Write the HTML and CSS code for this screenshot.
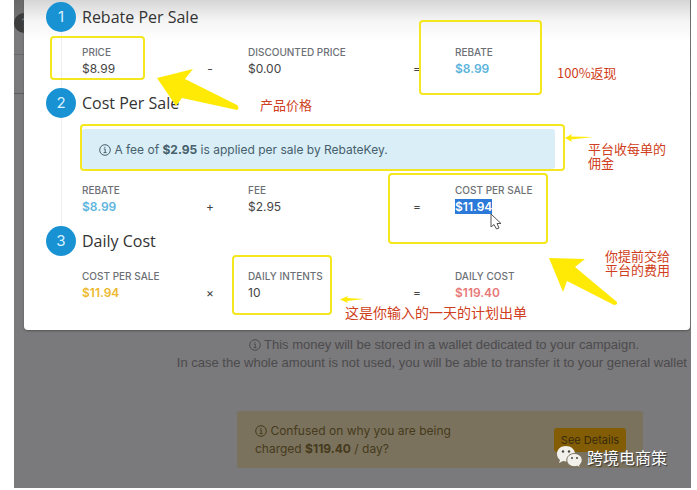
FILE: index.html
```html
<!DOCTYPE html>
<html lang="en">
<head>
  <meta charset="utf-8">
  <title>Rebate cost</title>
  <link rel="stylesheet" href="styles.css">
</head>
<body>
  <div class="screen">
    <span class="back-step">1</span>
    <div class="modal">
      <section class="step">
        <div class="number">1</div>
        <div class="content">
          <h2>Rebate Per Sale</h2>
          <div class="formula">
            <div><h3>Price</h3><p>$8.99</p></div>
            <span class="op">-</span>
            <div><h3>Discounted Price</h3><p>$0.00</p></div>
            <span class="op">=</span>
            <div><h3>Rebate</h3><p class="blue">$8.99</p></div>
          </div>
        </div>
      </section>
      <section class="step">
        <div class="number">2</div>
        <div class="content">
          <h2>Cost Per Sale</h2>
          <div class="info">
            <svg class="icon" viewBox="0 0 12 12"><circle cx="6" cy="6" r="5.3"/><path d="M4.8 5h1.4v3.5M4.6 8.6h3M5.9 2.8v1.1"/></svg>
            A fee of <b>$2.95</b> is applied per sale by RebateKey.
          </div>
          <div class="formula">
            <div><h3>Rebate</h3><p class="blue">$8.99</p></div>
            <span class="op">+</span>
            <div><h3>Fee</h3><p>$2.95</p></div>
            <span class="op">=</span>
            <div><h3>Cost Per Sale</h3><p><mark>$11.94</mark></p></div>
          </div>
        </div>
      </section>
      <section class="step">
        <div class="number">3</div>
        <div class="content">
          <h2>Daily Cost</h2>
          <div class="formula">
            <div><h3>Cost Per Sale</h3><p class="gold">$11.94</p></div>
            <span class="op">×</span>
            <div><h3>Daily Intents</h3><p>10</p></div>
            <span class="op">=</span>
            <div><h3>Daily Cost</h3><p class="red">$119.40</p></div>
          </div>
        </div>
      </section>
    </div>

    <div class="wallet">
      <p class="first">
        <svg class="icon" viewBox="0 0 12 12"><circle cx="6" cy="6" r="5.3"/><path d="M4.8 5h1.4v3.5M4.6 8.6h3M5.9 2.8v1.1"/></svg>
        This money will be stored in a wallet dedicated to your campaign.
      </p>
      <p>In case the whole amount is not used, you will be able to transfer it to your general wallet</p>
    </div>

    <div class="warning">
      <p>
        <svg class="icon" viewBox="0 0 12 12"><circle cx="6" cy="6" r="5.3"/><path d="M4.8 5h1.4v3.5M4.6 8.6h3M5.9 2.8v1.1"/></svg>
        Confused on why you are being<br>charged <b>$119.40</b> / day?
      </p>
      <button type="button">See Details</button>
    </div>
  </div>

  <!-- hand drawn notes on top of the page -->
  <svg class="marks" width="697" height="490" viewBox="0 0 697 490">
    <g class="frames">
      <rect x="51" y="37" width="93" height="42" rx="3"/>
      <rect x="420" y="21" width="121" height="73" rx="3"/>
      <rect x="81" y="125" width="483" height="45" rx="3"/>
      <rect x="389" y="174" width="158" height="69" rx="3"/>
      <rect x="233" y="256" width="98" height="58" rx="3"/>
    </g>
    <g class="arrows">
      <path d="M157 78 193 69 185 79 237 105Q240 108 237 110L182 98 176 106Z"/>
      <path d="M549 258 585 259 575 267 617 302Q618 305 614 305L567 281 563 292Z"/>
      <path d="M565 138 572 134 571 136.5 593 137 571 139.5 572 142Z"/>
      <path d="M340 299.5 348 296 347 298 364 299 347 301 348 303Z"/>
    </g>
    <path class="cursor" d="M491 214V227L494 224.500 496.500 229 499 228 497 223.500H501Z"/>
  </svg>
  <div class="note note-price">产品价格</div>
  <div class="note note-rebate">100%返现</div>
  <div class="note note-fee">平台收每单的<br>佣金</div>
  <div class="note note-cost">你提前交给<br>平台的费用</div>
  <div class="note note-daily">这是你输入的一天的计划出单</div>
  <div class="watermark">
    <svg width="27" height="24" viewBox="0 0 27 24">
      <path class="bubble" d="M10 1C4.500 1 1 4.500 1 9c0 2.500 1.200 4.600 3 6l-1 3 4-2c1 .3 2 .4 3 .4 5 0 9-3.200 9-7.600S15 1 10 1Z"/>
      <path class="bubble front" d="M18.500 8.500c-4.500 0-7.700 3-7.700 6.600s3.200 6.600 7.700 6.600c1 0 2-.2 2.800-.5l3 1.600-.8-2.600c1.600-1.200 2.700-3 2.700-5.100 0-3.600-3.300-6.600-7.700-6.600Z"/>
      <g class="eyes"><circle cx="7" cy="6.500" r="1.200"/><circle cx="13" cy="6.500" r="1.200"/><circle cx="16" cy="13" r="1"/><circle cx="21" cy="13" r="1"/></g>
    </svg>
    跨境电商策
  </div>
</body>
</html>
```

FILE: styles.css
```css
body {
  margin: 0;
  background: white;
  font-family: Inter, "Noto Sans CJK SC", sans-serif;
  font-size: 12px;
  line-height: 18px;
  color: #444;
}
h2, h3, p {
  margin: 0;
}
.screen {
  position: relative;
  margin: 0 6px 2px 14px;
  padding: 0 1px 20px 10px;
  background: linear-gradient(#686868, #7a797b 30px);
  overflow: hidden;
}
.back-step {
  position: absolute;
  left: 0;
  top: 13px;
  width: 20px;
  height: 20px;
  line-height: 20px;
  border-radius: 50%;
  background: #3c3c3c;
  color: #888;
  text-align: center;
}
.screen::before {
  content: "";
  position: absolute;
  left: 0;
  right: 0;
  top: 54px;
  height: 38px;
  border-top: 1px solid #686868;
  border-bottom: 1px solid #5c5c5c;
}
.modal {
  position: relative;
  padding: 2px 22px 18px;
  border-radius: 0 0 4px 4px;
  background: linear-gradient(#d6d6d6, #f4f4f4 20px, white 42px);
  box-shadow: 0 1px 2px #555;
}
.step {
  display: flex;
  gap: 6px;
  position: relative;
}
.step:not(:last-child)::before {
  content: "";
  position: absolute;
  left: 15px;
  top: 30px;
  bottom: 0;
  border-left: 1px solid #eee;
}
.number {
  flex: none;
  width: 30px;
  height: 30px;
  border-radius: 50%;
  background: #1992d4;
  color: #d8f1ff;
  font-size: 15px;
  line-height: 30px;
  text-align: center;
}
.content {
  flex: 1;
}
h2 {
  font-family: "Open Sans", sans-serif;
  font-size: 16px;
  font-weight: 400;
  line-height: 30px;
  color: #333;
}
h3 {
  font-size: 10px;
  font-weight: 500;
  line-height: 16px;
  text-transform: uppercase;
  white-space: nowrap;
  color: #6c7075;
}
.formula {
  display: grid;
  grid-template-columns: 110fr 36px 171fr 36px 233fr;
  align-items: end;
  padding: 12px 0 10px;
}
.formula > div {
  height: 34px;
}
.op + div {
  padding-left: 20px;
}
.op {
  text-align: center;
}
.info {
  margin: 11px 113px 1px 0;
  padding: 12px 17px 10px;
  border-radius: 3px;
  background: #d9eef7;
  color: #46606c;
}
.icon {
  width: 12px;
  height: 12px;
  vertical-align: -2px;
  fill: none;
  stroke: currentColor;
}
.blue, .gold, .red {
  font-weight: 600;
}
.blue {
  color: #5bb4dc;
}
.gold {
  color: #edb92e;
}
.red {
  color: #e87878;
}
mark {
  background: #2b79d8;
  color: white;
  font-weight: 600;
}
.wallet {
  padding: 6px 3px 0 0;
  font-family: "Liberation Sans", Arial, sans-serif;
  font-size: 13px;
  text-align: right;
  white-space: nowrap;
  color: #4c4b4d;
}
.wallet .first {
  padding-right: 48px;
}
.warning {
  display: flex;
  align-items: center;
  justify-content: space-between;
  margin: 39px 47px 0 213px;
  padding: 11px 17px 10px 18px;
  border-radius: 3px;
  background: #7b725e;
  color: #453a1b;
}
.warning button {
  width: 72px;
  height: 24px;
  padding: 0;
  border: 0;
  border-radius: 3px;
  background: #825d05;
  color: #392b0c;
  font: 11px Inter, sans-serif;
}
.marks {
  position: absolute;
  left: 0;
  top: 0;
}
.frames {
  fill: none;
  stroke: #f5e71f;
  stroke-width: 2;
}
.arrows {
  fill: #ffea05;
}
.cursor {
  fill: white;
  stroke: #555;
}
.note {
  position: absolute;
  font-family: "Noto Sans CJK SC", sans-serif;
  font-size: 13px;
  line-height: 14px;
  white-space: nowrap;
  color: #cf3e20;
}
.note-price {
  left: 260px;
  top: 98px;
}
.note-rebate {
  left: 557px;
  top: 66px;
}
.note-fee {
  left: 588px;
  top: 142px;
}
.note-cost {
  left: 605px;
  top: 249px;
}
.note-daily {
  left: 345px;
  top: 305px;
  font-size: 14px;
}
.watermark {
  position: absolute;
  left: 556px;
  top: 445px;
  display: flex;
  gap: 4px;
  font-family: "Noto Sans CJK SC", sans-serif;
  font-size: 16px;
  line-height: 24px;
  color: white;
  text-shadow: 1px 1px 1px #333;
}
.bubble {
  fill: #f2f0ea;
}
.front {
  stroke: #77705f;
}
.eyes {
  fill: #4b4639;
}
```
